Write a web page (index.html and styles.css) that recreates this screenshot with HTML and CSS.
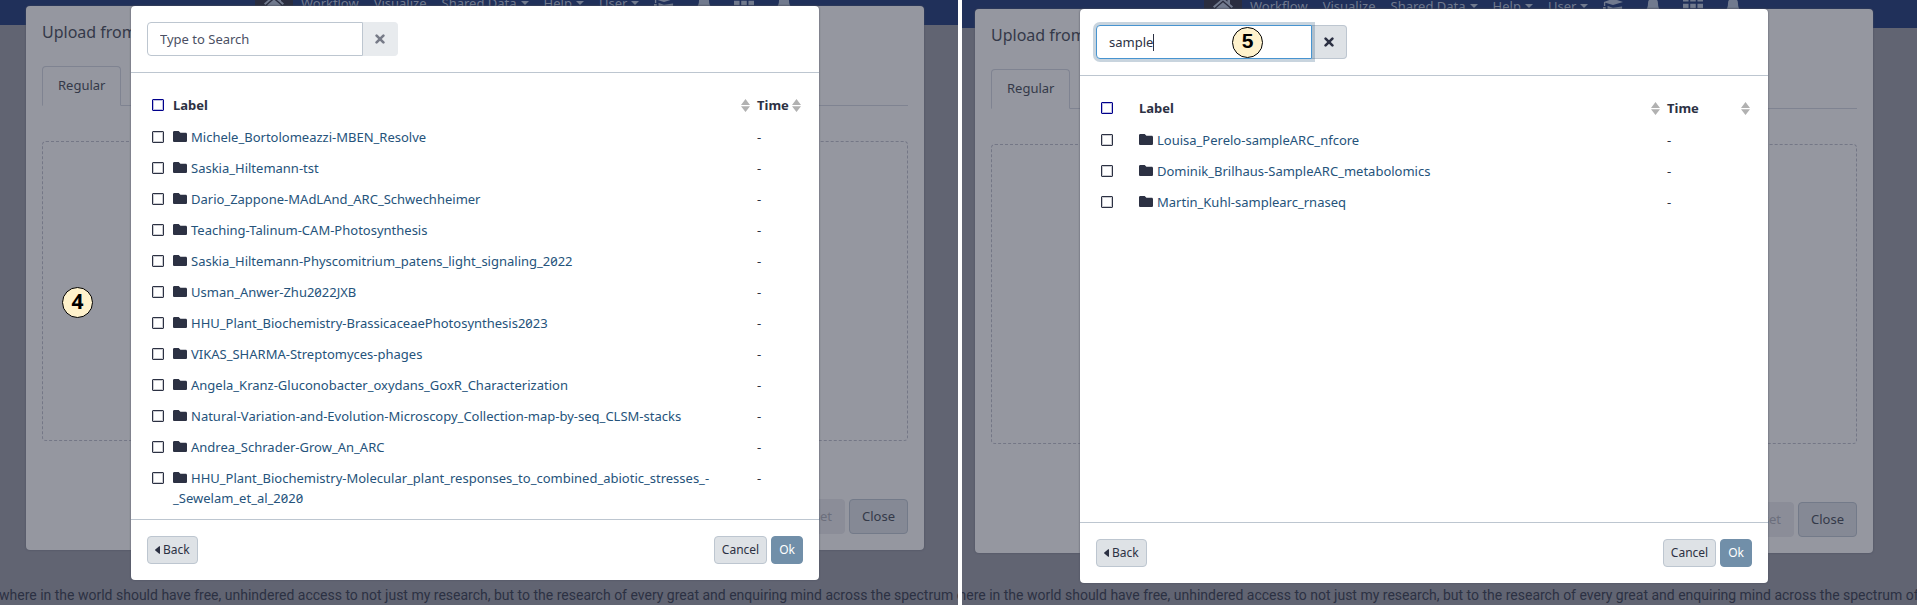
FILE: index.html
```html
<!DOCTYPE html>
<html lang="en">
<head>
<meta charset="utf-8">
<title>Upload from remote files</title>
<link rel="stylesheet" href="styles.css">
</head>
<body>
<svg class="sprite" aria-hidden="true">
  <symbol id="folder" viewBox="0 0 512 400"><path d="M464 64H272L208 0H48C21 0 0 21 0 48v304c0 27 21 48 48 48h416c27 0 48-21 48-48V112c0-27-21-48-48-48z"/></symbol>
  <symbol id="times" viewBox="0 0 10 10"><path d="M1.600 1.600 8.400 8.400M8.400 1.600 1.600 8.400" stroke="currentColor" stroke-width="2.600" stroke-linecap="round"/></symbol>
  <symbol id="sort" viewBox="0 0 9 13"><path d="M4.500 0 9 6H0zM0 7.200h9L4.500 13z"/></symbol>
  <symbol id="caret-left" viewBox="0 0 5 8"><path d="M5 .6v6.800c0 .5-.5.6-.8.3L.3 4.400a.5.5 0 0 1 0-.8L4.200.300C4.500 0 5 .1 5 .6z"/></symbol>
  <symbol id="caret-down" viewBox="0 0 8 4"><path d="M0 0h8L4 4z"/></symbol>
  <symbol id="home" viewBox="0 0 20 16"><path d="M10 0 0 8.500l1.300 1.400L10 2.500l8.700 7.400L20 8.500l-3-2.600V1.500h-2.500v2.300z"/><path d="M10 4.300 3.300 10v6h5v-4.500h3.400V16h5v-6z"/></symbol>
  <symbol id="cap" viewBox="0 0 22 16"><path d="M11 0 22 3.500 11 7 2.500 4.300V8H1V3.500zM0 9h3v7H0zM5 8l6 2 10-1.500V16H5z"/></symbol>
  <symbol id="bell" viewBox="0 0 16 18"><path d="M8 0c.7 0 1.200.5 1.200 1.200C12 1.800 13 4 13 6.500c0 4 1.200 5.500 3 7.500H0c1.800-2 3-3.500 3-7.500C3 4 4 1.800 6.800 1.200 6.800.5 7.300 0 8 0zM6 15h4a2 2 0 0 1-4 0z"/></symbol>
  <symbol id="grid" viewBox="0 0 18 16"><path d="M0 0h5v4H0zM6.500 0h5v4h-5zM13 0h5v4h-5zM0 6h5v4H0zM6.500 6h5v4h-5zM13 6h5v4h-5zM0 12h5v4H0zM6.500 12h5v4h-5zM13 12h5v4h-5z"/></symbol>
</svg>

<main class="panes">
  <section class="pane pane-list" aria-label="File list">
    <div class="page">
      <nav class="masthead">
        <a class="home" href="#" aria-label="Home"><svg class="i-home"><use href="#home"/></svg></a>
        <a href="#">Workflow</a><a href="#">Visualize</a>
        <a href="#">Shared Data <svg class="i-down"><use href="#caret-down"/></svg></a>
        <a href="#">Help <svg class="i-down"><use href="#caret-down"/></svg></a>
        <a href="#">User <svg class="i-down"><use href="#caret-down"/></svg></a>
        <span class="nav-icons">
          <a href="#" aria-label="Training"><svg class="i-nav"><use href="#cap"/></svg></a>
          <a href="#" aria-label="Notifications"><svg class="i-nav"><use href="#bell"/></svg></a>
          <a href="#" aria-label="Apps"><svg class="i-nav"><use href="#grid"/></svg></a>
          <a href="#" aria-label="Alerts"><svg class="i-nav"><use href="#bell"/></svg></a>
        </span>
      </nav>
      <p class="tagline">where in the world should have free, unhindered access to not just my research, but to the research of every great and enquiring mind across the spectrum of</p>
    </div>
    <div class="upload">
      <h1 class="upload-title">Upload from</h1>
      <div class="tabs"><a class="tab" href="#">Regular</a></div>
      <div class="dropzone"></div>
      <div class="upload-actions">
        <button class="btn" type="button" disabled>Reset</button>
        <button class="btn" type="button">Close</button>
      </div>
    </div>
    <div class="dialog" role="dialog" aria-label="Choose files">
      <header class="dialog-head">
        <div class="search">
          <input class="search-input" type="text" placeholder="Type to Search" aria-label="Search">
          <button class="search-clear" type="button" disabled aria-label="Clear"><svg class="i-times"><use href="#times"/></svg></button>
        </div>
      </header>
      <div class="dialog-body">
        <table class="files">
          <thead><tr>
            <th class="c-check"><input class="check check-all" type="checkbox" aria-label="Select all"></th>
            <th><span class="sortable">Label <svg class="i-sort"><use href="#sort"/></svg></span></th>
            <th class="c-time"><span class="sortable">Time <svg class="i-sort"><use href="#sort"/></svg></span></th>
          </tr></thead>
          <tbody>
            <tr><td><input class="check" type="checkbox" aria-label="Select"></td><td><svg class="i-folder"><use href="#folder"/></svg><a href="#">Michele_Bortolomeazzi-MBEN_Resolve</a></td><td>-</td></tr>
            <tr><td><input class="check" type="checkbox" aria-label="Select"></td><td><svg class="i-folder"><use href="#folder"/></svg><a href="#">Saskia_Hiltemann-tst</a></td><td>-</td></tr>
            <tr><td><input class="check" type="checkbox" aria-label="Select"></td><td><svg class="i-folder"><use href="#folder"/></svg><a href="#">Dario_Zappone-MAdLAnd_ARC_Schwechheimer</a></td><td>-</td></tr>
            <tr><td><input class="check" type="checkbox" aria-label="Select"></td><td><svg class="i-folder"><use href="#folder"/></svg><a href="#">Teaching-Talinum-CAM-Photosynthesis</a></td><td>-</td></tr>
            <tr><td><input class="check" type="checkbox" aria-label="Select"></td><td><svg class="i-folder"><use href="#folder"/></svg><a href="#">Saskia_Hiltemann-Physcomitrium_patens_light_signaling_2022</a></td><td>-</td></tr>
            <tr><td><input class="check" type="checkbox" aria-label="Select"></td><td><svg class="i-folder"><use href="#folder"/></svg><a href="#">Usman_Anwer-Zhu2022JXB</a></td><td>-</td></tr>
            <tr><td><input class="check" type="checkbox" aria-label="Select"></td><td><svg class="i-folder"><use href="#folder"/></svg><a href="#">HHU_Plant_Biochemistry-BrassicaceaePhotosynthesis2023</a></td><td>-</td></tr>
            <tr><td><input class="check" type="checkbox" aria-label="Select"></td><td><svg class="i-folder"><use href="#folder"/></svg><a href="#">VIKAS_SHARMA-Streptomyces-phages</a></td><td>-</td></tr>
            <tr><td><input class="check" type="checkbox" aria-label="Select"></td><td><svg class="i-folder"><use href="#folder"/></svg><a href="#">Angela_Kranz-Gluconobacter_oxydans_GoxR_Characterization</a></td><td>-</td></tr>
            <tr><td><input class="check" type="checkbox" aria-label="Select"></td><td><svg class="i-folder"><use href="#folder"/></svg><a href="#">Natural-Variation-and-Evolution-Microscopy_Collection-map-by-seq_CLSM-stacks</a></td><td>-</td></tr>
            <tr><td><input class="check" type="checkbox" aria-label="Select"></td><td><svg class="i-folder"><use href="#folder"/></svg><a href="#">Andrea_Schrader-Grow_An_ARC</a></td><td>-</td></tr>
            <tr><td><input class="check" type="checkbox" aria-label="Select"></td><td><svg class="i-folder"><use href="#folder"/></svg><a href="#">HHU_Plant_Biochemistry-Molecular_plant_responses_to_combined_abiotic_stresses_-<wbr>_Sewelam_et_al_2020</a></td><td>-</td></tr>
          </tbody>
        </table>
      </div>
      <footer class="dialog-foot">
        <button class="btn btn-sm btn-back" type="button"><svg class="i-left"><use href="#caret-left"/></svg>Back</button>
        <button class="btn btn-sm" type="button">Cancel</button>
        <button class="btn btn-sm btn-ok" type="button">Ok</button>
      </footer>
    </div>
    <span class="step step-four">4</span>
  </section>

  <section class="pane pane-filtered" aria-label="Filtered file list">
    <div class="page">
      <nav class="masthead">
        <a class="home" href="#" aria-label="Home"><svg class="i-home"><use href="#home"/></svg></a>
        <a href="#">Workflow</a><a href="#">Visualize</a>
        <a href="#">Shared Data <svg class="i-down"><use href="#caret-down"/></svg></a>
        <a href="#">Help <svg class="i-down"><use href="#caret-down"/></svg></a>
        <a href="#">User <svg class="i-down"><use href="#caret-down"/></svg></a>
        <span class="nav-icons">
          <a href="#" aria-label="Training"><svg class="i-nav"><use href="#cap"/></svg></a>
          <a href="#" aria-label="Notifications"><svg class="i-nav"><use href="#bell"/></svg></a>
          <a href="#" aria-label="Apps"><svg class="i-nav"><use href="#grid"/></svg></a>
          <a href="#" aria-label="Alerts"><svg class="i-nav"><use href="#bell"/></svg></a>
        </span>
      </nav>
      <p class="tagline">where in the world should have free, unhindered access to not just my research, but to the research of every great and enquiring mind across the spectrum of</p>
    </div>
    <div class="upload">
      <h1 class="upload-title">Upload from</h1>
      <div class="tabs"><a class="tab" href="#">Regular</a></div>
      <div class="dropzone"></div>
      <div class="upload-actions">
        <button class="btn" type="button" disabled>Reset</button>
        <button class="btn" type="button">Close</button>
      </div>
    </div>
    <div class="dialog" role="dialog" aria-label="Choose files">
      <header class="dialog-head">
        <div class="search">
          <input class="search-input is-focused" type="text" value="sample" aria-label="Search">
          <span class="text-cursor"></span>
          <button class="search-clear" type="button" aria-label="Clear"><svg class="i-times"><use href="#times"/></svg></button>
          <span class="step step-five">5</span>
        </div>
      </header>
      <div class="dialog-body">
        <table class="files">
          <thead><tr>
            <th class="c-check"><input class="check check-all" type="checkbox" aria-label="Select all"></th>
            <th><span class="sortable">Label <svg class="i-sort"><use href="#sort"/></svg></span></th>
            <th class="c-time"><span class="sortable">Time <svg class="i-sort"><use href="#sort"/></svg></span></th>
          </tr></thead>
          <tbody>
            <tr><td><input class="check" type="checkbox" aria-label="Select"></td><td><svg class="i-folder"><use href="#folder"/></svg><a href="#">Louisa_Perelo-sampleARC_nfcore</a></td><td>-</td></tr>
            <tr><td><input class="check" type="checkbox" aria-label="Select"></td><td><svg class="i-folder"><use href="#folder"/></svg><a href="#">Dominik_Brilhaus-SampleARC_metabolomics</a></td><td>-</td></tr>
            <tr><td><input class="check" type="checkbox" aria-label="Select"></td><td><svg class="i-folder"><use href="#folder"/></svg><a href="#">Martin_Kuhl-samplearc_rnaseq</a></td><td>-</td></tr>
          </tbody>
        </table>
      </div>
      <footer class="dialog-foot">
        <button class="btn btn-sm btn-back" type="button"><svg class="i-left"><use href="#caret-left"/></svg>Back</button>
        <button class="btn btn-sm" type="button">Cancel</button>
        <button class="btn btn-sm btn-ok" type="button">Ok</button>
      </footer>
    </div>
  </section>
</main>
</body>
</html>
```
FILE: styles.css
```css
* { box-sizing: border-box; }

body {
  margin: 0;
  background: #fff;
  color: #2c3143;
  font: 13px/20px "Noto Sans", "Open Sans", sans-serif;
  font-feature-settings: "zero", "cv08";
}

a { color: inherit; text-decoration: none; }
svg { fill: currentColor; flex: none; }
button, input { font: inherit; font-feature-settings: inherit; color: inherit; margin: 0; }
.sprite { display: none; }

.panes {
  display: grid;
  grid-template-columns: 958fr 955fr;
  gap: 4px;
  min-height: 100vh;
  padding-bottom: 1px;
}

/* Every pane stacks page, upload window and dialog in one grid cell. */
.pane {
  position: relative;
  display: grid;
  grid-template: minmax(0, 1fr) / minmax(0, 1fr);
  overflow: hidden;
  background: #616472;
}
.pane > .page, .pane > .upload, .pane > .dialog { grid-area: 1 / 1; }

.pane-list { --top: 6px; --bottom: 25px; --left: 26px; --right: 34px; --nav: 25px; --shift: 0px; --check: 21px; --time: 51px; }
.pane-filtered { --top: 9px; --bottom: 22px; --left: 13px; --right: 44px; --nav: 28px; --shift: -13px; --check: 38px; --time: 90px; }

.page { display: flex; flex-direction: column; justify-content: space-between; overflow: hidden; }

.masthead {
  display: flex;
  align-items: center;
  gap: 15px;
  height: 44px;
  margin-top: calc(var(--nav) - 44px);
  padding-left: calc(255px + var(--shift));
  background: #20305a;
  color: #717a8e;
  white-space: nowrap;
}
.masthead a { display: flex; align-items: center; gap: 4px; }
.masthead .home { align-self: stretch; padding: 0 9px; margin-right: -7px; background: #2a2d3f; }
.nav-icons { display: flex; gap: 20px; }
.i-home { width: 20px; height: 16px; }
.i-down { width: 8px; height: 4px; }
.i-nav { width: 20px; height: 18px; }

.tagline {
  margin: 0 0 0 calc(var(--shift) - 1px);
  font: 14px/20px Roboto, sans-serif;
  white-space: nowrap;
}

.upload {
  display: flex;
  flex-direction: column;
  margin: var(--top) var(--right) calc(var(--bottom) + 30px) var(--left);
  padding: 16px;
  border-radius: 4px;
  background: #9597a0;
  box-shadow: 0 0 2px #484c5b;
  color: #343949;
}
.upload-title { margin: 0; font-size: 16px; line-height: 20px; font-weight: 400; }
.tabs { display: flex; margin-top: 24px; border-bottom: 1px solid #7f8391; }
.tab {
  margin-bottom: -1px;
  padding: 8px 15px 10px;
  border: 1px solid #7f8391;
  border-bottom-color: #9597a0;
  border-radius: 4px 4px 0 0;
}
.dropzone { flex: 1; margin: 35px 0 58px; border: 1px dashed #747786; border-radius: 4px; }
.upload-actions { display: flex; justify-content: flex-end; gap: 4px; }

.btn {
  padding: 6px 12px;
  border: 1px solid #bdc6d0;
  border-radius: 4px;
  background: #dee2e6;
  line-height: 21px;
}
.upload .btn { background: #858995; border-color: #737a89; }
.upload .btn:disabled { background: #8b8d98; border-color: #8b8d98; color: #6c6f7d; }
.dialog .btn-sm { padding: 4px 7px; font-size: 12px; line-height: 18px; }
.btn-ok { background: #718fa9; border-color: #718fa9; color: #fff; }
.btn-back { display: flex; align-items: center; gap: 3px; margin-right: auto; }
.i-left { width: 5px; height: 8px; }

.dialog {
  display: flex;
  flex-direction: column;
  margin: var(--top) calc(var(--right) + 105px) var(--bottom) calc(var(--left) + 105px);
  border-radius: 4px;
  background: #fff;
  box-shadow: 0 0 2px #484c5b;
}
.dialog-head { padding: 16px; border-bottom: 1px solid #bdc6d0; }
.dialog-body { flex: 1; padding: 16px 16px 0; }
.dialog-foot { display: flex; gap: 4px; padding: 16px; border-top: 1px solid #bdc6d0; }

.search { position: relative; display: flex; }
.search-input {
  width: 216px;
  height: 34px;
  padding: 0 12px;
  border: 1px solid #bdc6d0;
  border-radius: 4px 0 0 4px;
  background: #fff;
  outline: 0;
}
.search-input::placeholder { color: #4b5064; opacity: 1; }
.is-focused { z-index: 1; border-color: #4794d0; box-shadow: 0 0 0 3px rgba(37, 83, 123, .25); }
.search-clear {
  display: grid;
  place-items: center;
  width: 35px;
  padding: 0;
  border: 1px solid #bdc6d0;
  border-left: 0;
  border-radius: 0 4px 4px 0;
  background: #dee2e6;
}
.search-clear:disabled { background: #e8ebee; border-color: #e8ebee; color: #777b88; }
.i-times { width: 10px; height: 10px; }
.text-cursor { position: absolute; z-index: 2; left: 57px; top: 9px; width: 1px; height: 17px; background: #2c3143; }

.files { width: 100%; table-layout: fixed; border-collapse: collapse; }
.files th, .files td { padding: 5px 5px 6px; text-align: left; vertical-align: top; }
.files th { padding: 6px 2px 7px 5px; font-weight: 700; }
.files td a { color: #25537b; }
.files .c-check { width: var(--check); }
.files .c-time { width: var(--time); }
.sortable { display: flex; align-items: center; justify-content: space-between; }
.i-sort { width: 9px; height: 13px; color: #b1b1b1; }
.i-folder { width: 14px; height: 11px; margin-right: 4px; }
.check {
  display: block;
  appearance: none;
  width: 12px;
  height: 12px;
  margin-top: 4px;
  border: 1px solid #2c3143;
  border-radius: 1px;
  box-shadow: inset 0 0 0 1px rgba(44, 49, 67, .25);
}
.check-all { border-color: #00008b; box-shadow: inset 0 0 0 1px rgba(0, 0, 139, .25); }

.step {
  position: absolute;
  z-index: 3;
  width: 31px;
  height: 31px;
  border: 1px solid #000;
  border-radius: 50%;
  background: #fff2cc;
  color: #000;
  font: 700 21px/26px "Noto Sans", sans-serif;
  text-align: center;
}
.step-four { left: 62px; top: 287px; }
.step-five { left: 136px; top: 2px; font-family: "Liberation Sans", sans-serif; }
```
